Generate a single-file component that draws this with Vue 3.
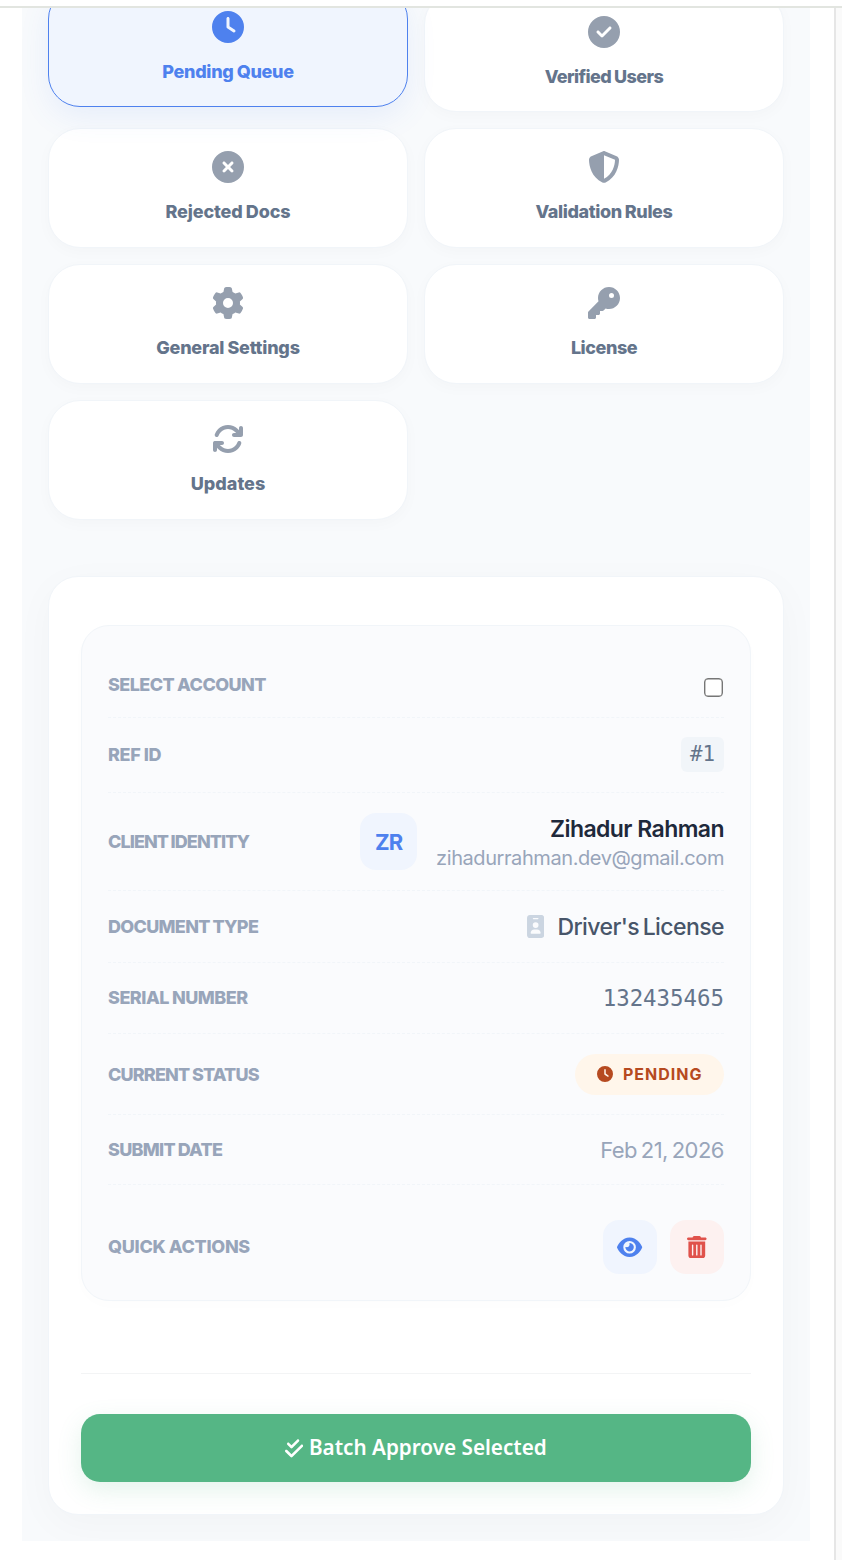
<script setup>
const disc = 'M256 0a256 256 0 1 1 0 512A256 256 0 1 1 256 0z'
const icons = {
  clock: { box: '0 0 512 512', d: disc + 'M232 120V256c0 8 4 15.5 10.7 20l96 64c11 7.4 25.9 4.4 33.3-6.7s4.4-25.9-6.7-33.3L280 243.2V120c0-13.3-10.7-24-24-24s-24 10.7-24 24z' },
  check: { box: '0 0 512 512', d: disc + 'M369 209L241 337c-9.4 9.4-24.6 9.4-33.9 0l-64-64c-9.4-9.4-9.4-24.6 0-33.9s24.6-9.4 33.9 0l47 47L335 175c9.4-9.4 24.6-9.4 33.9 0s9.4 24.6 0 33.9z' },
  xmark: { box: '0 0 512 512', d: disc + 'M175 175c9.4-9.4 24.6-9.4 33.9 0l47 47 47-47c9.4-9.4 24.6-9.4 33.9 0s9.4 24.6 0 33.9l-47 47 47 47c9.4 9.4 9.4 24.6 0 33.9s-24.6 9.4-33.9 0l-47-47-47 47c-9.4 9.4-24.6 9.4-33.9 0s-9.4-24.6 0-33.9l47-47-47-47c-9.4-9.4-9.4-24.6 0-33.9z' },
  shield: { box: '0 0 512 512', d: 'M256 0c4.6 0 9.2 1 13.4 2.9L457.7 82.8c22 9.3 38.4 31 38.3 57.2c-.5 99.2-41.3 280.7-213.6 363.2c-16.7 8-36.1 8-52.8 0C57.3 420.7 16.5 239.2 16 140c-.1-26.2 16.3-47.9 38.3-57.2L242.7 2.9C246.8 1 251.4 0 256 0zm0 66.8V444.8C394 378 431.1 230.1 432 141.4L256 66.8z' },
  gear: { box: '0 0 512 512', d: 'M495.9 166.6c3.2 8.7 .5 18.4-6.4 24.6l-43.3 39.4c1.1 8.3 1.7 16.8 1.7 25.4s-.6 17.1-1.7 25.4l43.3 39.4c6.9 6.2 9.6 15.9 6.4 24.6c-4.4 11.9-9.7 23.3-15.8 34.3l-4.7 8.1c-6.6 11-14 21.4-22.1 31.2c-5.9 7.2-15.7 9.6-24.5 6.8l-55.7-17.7c-13.4 10.3-28.2 18.9-44 25.4l-12.5 57.1c-2 9.1-9 16.3-18.2 17.8c-13.8 2.3-28 3.5-42.5 3.5s-28.7-1.2-42.5-3.5c-9.2-1.5-16.2-8.7-18.2-17.8l-12.5-57.1c-15.8-6.5-30.6-15.1-44-25.4L83.1 425.9c-8.8 2.8-18.6 .3-24.5-6.8c-8.1-9.8-15.5-20.2-22.1-31.2l-4.7-8.1c-6.1-11-11.4-22.4-15.8-34.3c-3.2-8.7-.5-18.4 6.4-24.6l43.3-39.4C64.6 273.1 64 264.6 64 256s.6-17.1 1.7-25.4L22.4 191.2c-6.9-6.2-9.6-15.9-6.4-24.6c4.4-11.9 9.7-23.3 15.8-34.3l4.7-8.1c6.6-11 14-21.4 22.1-31.2c5.9-7.2 15.7-9.6 24.5-6.8l55.7 17.7c13.4-10.3 28.2-18.9 44-25.4l12.5-57.1c2-9.1 9-16.3 18.2-17.8C227.3 1.2 241.5 0 256 0s28.7 1.2 42.5 3.5c9.2 1.5 16.2 8.7 18.2 17.8l12.5 57.1c15.8 6.5 30.6 15.1 44 25.4l55.7-17.7c8.8-2.8 18.6-.3 24.5 6.8c8.1 9.8 15.5 20.2 22.1 31.2l4.7 8.1c6.1 11 11.4 22.4 15.8 34.3zM256 336a80 80 0 1 0 0-160 80 80 0 1 0 0 160z' },
  key: { box: '0 0 512 512', d: 'M336 352c97.2 0 176-78.8 176-176S433.2 0 336 0S160 78.8 160 176c0 18.7 2.9 36.8 8.3 53.7L7 391c-4.5 4.5-7 10.6-7 17v80c0 13.3 10.7 24 24 24h80c13.3 0 24-10.7 24-24V448h40c13.3 0 24-10.7 24-24V384h40c6.4 0 12.5-2.5 17-7l33.3-33.3c16.9 5.4 35 8.3 53.7 8.3zM376 96a40 40 0 1 1 0 80 40 40 0 1 1 0-80z' },
  rotate: { box: '0 0 512 512', d: 'M105.1 202.6c7.7-21.8 20.2-42.3 37.8-59.8c62.5-62.5 163.8-62.5 226.3 0L386.3 160H352c-17.7 0-32 14.3-32 32s14.3 32 32 32H463.5h.4c17.7 0 32-14.3 32-32V80c0-17.7-14.3-32-32-32s-32 14.3-32 32v35.2L414.4 97.6c-87.5-87.5-229.3-87.5-316.8 0C73.2 122 55.6 150.7 44.8 181.4c-5.9 16.7 2.9 34.9 19.5 40.8s34.9-2.9 40.8-19.5zM39 289.3c-5 1.5-9.8 4.2-13.7 8.2c-4 4-6.7 8.8-8.1 14c-.3 1.2-.6 2.5-.8 3.8c-.3 1.7-.4 3.4-.4 5.1V432c0 17.7 14.3 32 32 32s32-14.3 32-32V396.9l17.6 17.5c87.5 87.4 229.3 87.4 316.7 0c24.4-24.4 42.1-53.1 52.9-83.8c5.9-16.7-2.9-34.9-19.5-40.8s-34.9 2.9-40.8 19.5c-7.7 21.8-20.2 42.3-37.8 59.8c-62.5 62.5-163.8 62.5-226.3 0l-.1-.1L125.6 352H160c17.7 0 32-14.3 32-32s-14.3-32-32-32H48.4c-1.6 0-3.2 .1-4.8 .3s-3.1 .5-4.6 1z' },
  badge: { box: '0 0 384 512', d: 'M64 0C28.7 0 0 28.7 0 64V448c0 35.3 28.7 64 64 64H320c35.3 0 64-28.7 64-64V64c0-35.3-28.7-64-64-64H64zm96 320h64c44.2 0 80 35.8 80 80c0 8.8-7.2 16-16 16H96c-8.8 0-16-7.2-16-16c0-44.2 35.8-80 80-80zm-32-96a64 64 0 1 1 128 0 64 64 0 1 1-128 0zM144 64h96c8.8 0 16 7.2 16 16s-7.2 16-16 16H144c-8.8 0-16-7.2-16-16s7.2-16 16-16z' },
  eye: { box: '0 0 576 512', d: 'M288 32c-80.8 0-145.5 36.8-192.6 80.6C48.6 156 17.3 208 2.5 243.7c-3.3 7.9-3.3 16.7 0 24.6C17.3 304 48.6 356 95.4 399.4C142.5 443.2 207.2 480 288 480s145.5-36.8 192.6-80.6c46.8-43.5 78.1-95.4 93-131.1c3.3-7.9 3.3-16.7 0-24.6c-14.9-35.7-46.2-87.7-93-131.1C433.5 68.8 368.8 32 288 32zM144 256a144 144 0 1 1 288 0 144 144 0 1 1-288 0zm144-64c0 35.3-28.7 64-64 64c-7.1 0-13.9-1.2-20.3-3.3c-5.5-1.8-11.9 1.6-11.7 7.4c.3 6.9 1.3 13.8 3.2 20.7c13.7 51.2 66.4 81.6 117.6 67.9s81.6-66.4 67.9-117.6c-11.1-41.5-47.8-69.4-88.6-71.1c-5.8-.2-9.2 6.1-7.4 11.7c2.1 6.4 3.3 13.2 3.3 20.3z' },
  trash: { box: '0 0 448 512', d: 'M135.2 17.7C140.6 6.8 151.7 0 163.8 0H284.2c12.1 0 23.2 6.8 28.6 17.7L320 32h96c17.7 0 32 14.3 32 32s-14.3 32-32 32H32C14.3 96 0 81.7 0 64S14.3 32 32 32h96l7.2-14.3zM32 128H416V448c0 35.3-28.7 64-64 64H96c-35.3 0-64-28.7-64-64V128zm96 64c-8.8 0-16 7.2-16 16V432c0 8.8 7.2 16 16 16s16-7.2 16-16V208c0-8.8-7.2-16-16-16zm96 0c-8.8 0-16 7.2-16 16V432c0 8.8 7.2 16 16 16s16-7.2 16-16V208c0-8.8-7.2-16-16-16zm96 0c-8.8 0-16 7.2-16 16V432c0 8.8 7.2 16 16 16s16-7.2 16-16V208c0-8.8-7.2-16-16-16z' },
  double: { box: '0 0 448 512', d: 'M342.6 86.6c12.5-12.5 12.5-32.8 0-45.3s-32.8-12.5-45.3 0L160 178.7l-57.4-57.4c-12.5-12.5-32.8-12.5-45.3 0s-12.5 32.8 0 45.3l80 80c12.5 12.5 32.8 12.5 45.3 0l160-160zm96 128c12.5-12.5 12.5-32.8 0-45.3s-32.8-12.5-45.3 0L160 402.7 54.6 297.4c-12.5-12.5-32.8-12.5-45.3 0s-12.5 32.8 0 45.3l128 128c12.5 12.5 32.8 12.5 45.3 0l256-256z' },
}

const tabs = [
  { label: 'Pending Queue', icon: 'clock', track: -0.29, active: true },
  { label: 'Verified Users', icon: 'check', track: -0.58 },
  { label: 'Rejected Docs', icon: 'xmark', track: -0.13 },
  { label: 'Validation Rules', icon: 'shield', track: -0.39 },
  { label: 'General Settings', icon: 'gear', track: -0.22 },
  { label: 'License', icon: 'key', track: -0.45 },
  { label: 'Updates', icon: 'rotate', track: 0 },
]

const rows = [
  { key: 'select', label: 'SELECT ACCOUNT', track: -0.56 },
  { key: 'ref', label: 'REF ID', track: -0.3 },
  { key: 'client', label: 'CLIENT IDENTITY', track: -0.93 },
  { key: 'doc', label: 'DOCUMENT TYPE', track: -0.7 },
  { key: 'serial', label: 'SERIAL NUMBER', track: -0.5 },
  { key: 'status', label: 'CURRENT STATUS', track: -0.84 },
  { key: 'date', label: 'SUBMIT DATE', track: -0.72 },
  { key: 'actions', label: 'QUICK ACTIONS', track: -0.29 },
]
</script>

<template>
  <div class="page">
    <div class="topbar"></div>
    <div class="body">
      <main class="frame">
        <div class="content">
          <nav class="tabs">
            <a v-for="t in tabs" :key="t.label" class="tab" :class="{ active: t.active }">
              <svg class="tab-icon" :viewBox="icons[t.icon].box"><path fill-rule="evenodd" :d="icons[t.icon].d" /></svg>
              <span class="tab-label" :style="{ letterSpacing: t.track + 'px' }">{{ t.label }}</span>
            </a>
          </nav>

          <section class="panel">
            <div class="record">
              <div v-for="r in rows" :key="r.key" class="row" :class="r.key">
                <span class="label" :style="{ letterSpacing: r.track + 'px' }">{{ r.label }}</span>

                <input v-if="r.key === 'select'" type="checkbox" class="box" aria-label="Select account" />
                <span v-else-if="r.key === 'ref'" class="ref-id">#1</span>
                <div v-else-if="r.key === 'client'" class="client-info">
                  <span class="avatar">ZR</span>
                  <div class="person">
                    <span class="name">Zihadur Rahman</span>
                    <span class="email">zihadurrahman.dev@gmail.com</span>
                  </div>
                </div>
                <div v-else-if="r.key === 'doc'" class="doc-type">
                  <svg :viewBox="icons.badge.box"><path fill-rule="evenodd" :d="icons.badge.d" /></svg>
                  <span>Driver's License</span>
                </div>
                <span v-else-if="r.key === 'serial'" class="serial-no">132435465</span>
                <span v-else-if="r.key === 'status'" class="pill">
                  <svg :viewBox="icons.clock.box"><path fill-rule="evenodd" :d="icons.clock.d" /></svg>
                  <span>PENDING</span>
                </span>
                <span v-else-if="r.key === 'date'" class="date-text">Feb 21, 2026</span>
                <div v-else class="buttons">
                  <button class="act view" aria-label="View"><svg :viewBox="icons.eye.box"><path fill-rule="evenodd" :d="icons.eye.d" /></svg></button>
                  <button class="act remove" aria-label="Delete"><svg :viewBox="icons.trash.box"><path fill-rule="evenodd" :d="icons.trash.d" /></svg></button>
                </div>
              </div>
            </div>

            <div class="footer">
              <button class="approve">
                <svg :viewBox="icons.double.box"><path :d="icons.double.d" /></svg>
                <span>Batch Approve Selected</span>
              </button>
            </div>
          </section>
        </div>
      </main>
      <aside class="gutter"></aside>
    </div>
  </div>
</template>

<style>
body { background: #fff; }
</style>

<style scoped>
* { box-sizing: border-box; }
svg { display: block; fill: currentColor; flex: none; }
button { border: 0; padding: 0; cursor: pointer; }
.page {
  width: 842px; height: 1560px; overflow: hidden;
  display: flex; flex-direction: column;
  background: #fff; color: #64748b;
  font-family: Inter, "Liberation Sans", sans-serif;
}
.topbar { height: 8px; flex: none; border-bottom: 2px solid #e2e5e0; }
.body { flex: 1; min-height: 0; display: flex; }
.frame { width: 836px; padding-left: 22px; border-right: 2px solid #e6e6e6; overflow: hidden; }
.gutter { flex: 1; background: #fafafa; }
.content {
  width: 788px; height: 1533px; padding: 0 26px;
  background: #f8fafc; overflow: hidden;
}
.tabs { display: grid; grid-template-columns: 360px 360px; gap: 16px; margin-top: -16px; }
.tab {
  height: 120px; padding-top: 22px;
  display: flex; flex-direction: column; align-items: center; gap: 17px;
  background: #fff; border: 1px solid #f1f5f9; border-radius: 32px;
  box-shadow: 0 4px 15px rgba(0, 0, 0, .025);
}
.tab:nth-child(-n+2) { padding-top: 23px; }
.tab.active {
  transform: translateY(-5px); z-index: 1;
  color: #4e81ee; background: #f0f5fe; border-color: #4e81ee;
  box-shadow: 0 10px 30px rgba(78, 129, 238, .1);
}
.tab-icon { width: 32px; height: 32px; color: #959fae; }
.tab.active .tab-icon { color: #4e81ee; }
.tab-label { font-size: 18px; font-weight: 800; line-height: 24px; word-spacing: -.5px; white-space: nowrap; }

.panel {
  margin-top: 56px; width: 736px; height: 939px; padding: 48px 32px 0;
  background: #fff; border: 1px solid #f1f5f9; border-radius: 30px;
  box-shadow: 0 10px 40px rgba(0, 0, 0, .03);
}
.record {
  height: 676px; padding: 26px;
  background: #fafbfd; border: 1px solid #f1f5f9; border-radius: 28px;
  box-shadow: 0 4px 15px rgba(0, 0, 0, .01);
}
.row {
  display: flex; align-items: center; justify-content: space-between;
  border-bottom: 1px dashed #f1f5f9;
}
.label { font-size: 18px; font-weight: 800; line-height: 24px; word-spacing: -.5px; color: #98a5ba; white-space: nowrap; }
.select { height: 66px; }
.ref { height: 75px; }
.client { height: 98px; }
.doc { height: 72px; }
.serial { height: 71px; }
.status { height: 81px; }
.status .label { margin-top: 1px; }
.date { height: 70px; }
.actions { height: 89px; padding-top: 35px; border-bottom: 0; }

.box {
  appearance: none; width: 19px; height: 19px; margin: 6px 1px 0 0;
  background: #fff; border: 1.5px solid #767676; border-radius: 4px;
  box-shadow: inset 0 0 0 .4px #767676;
}
.ref-id {
  width: 43px; height: 35px; margin-bottom: 1px; border-radius: 6px; background: #f1f5f9;
  display: flex; align-items: center; justify-content: center;
  font: 400 20.8px/35px "DejaVu Sans Mono", monospace;
}
.client-info { display: flex; align-items: center; }
.avatar {
  width: 57px; height: 57px; border-radius: 16px; background: #f0f5fe; color: #4e81ee;
  display: flex; align-items: center; justify-content: center;
  font-size: 22px; font-weight: 700; letter-spacing: -1px;
}
.person { display: flex; flex-direction: column; align-items: flex-end; margin-left: 19px; padding-top: 2px; }
.name { font-size: 23px; font-weight: 600; line-height: 30px; letter-spacing: -.56px; color: #1e293b; }
.email { font-size: 20px; line-height: 28px; letter-spacing: -.42px; color: #98a5ba; }
.doc-type { display: flex; align-items: center; gap: 13px; font-size: 23px; font-weight: 500; letter-spacing: -.57px; word-spacing: -2px; color: #475569; }
.doc-type svg { width: 17.3px; height: 23px; color: #cbd5e1; }
.serial-no { font: 400 22.4px/30px "DejaVu Sans Mono", monospace; }
.pill {
  height: 41px; padding: 0 21.5px 0 22px; border-radius: 21px; background: #fff6eb; color: #b64a20;
  display: flex; align-items: center; gap: 9.5px;
  font-size: 16px; font-weight: 700; letter-spacing: 1px;
}
.pill svg { width: 16px; height: 16px; }
.date-text { font-size: 22px; letter-spacing: -.5px; word-spacing: -2px; color: #98a5ba; }
.buttons { display: flex; gap: 13px; }
.act { width: 54px; height: 54px; border-radius: 16px; display: flex; align-items: center; justify-content: center; }
.view { background: #f0f5fe; color: #4e81ee; }
.remove { background: #fdf1f0; color: #e0524b; }
.view svg { width: 25.2px; height: 22.4px; }
.remove svg { width: 19.6px; height: 22.4px; }

.footer { margin-top: 72px; padding-top: 40px; border-top: 1px solid #f3f4f5; }
.approve {
  width: 100%; height: 68px; border-radius: 19px; background: #55b685; color: #fff;
  display: flex; align-items: center; justify-content: center; gap: 5.5px;
  font: 600 20.7px/28px "Noto Sans", sans-serif;
  box-shadow: 0 8px 24px rgba(85, 182, 133, .16);
}
.approve svg { width: 18.2px; height: 20.8px; }
.approve span { margin-bottom: 2px; }
</style>
